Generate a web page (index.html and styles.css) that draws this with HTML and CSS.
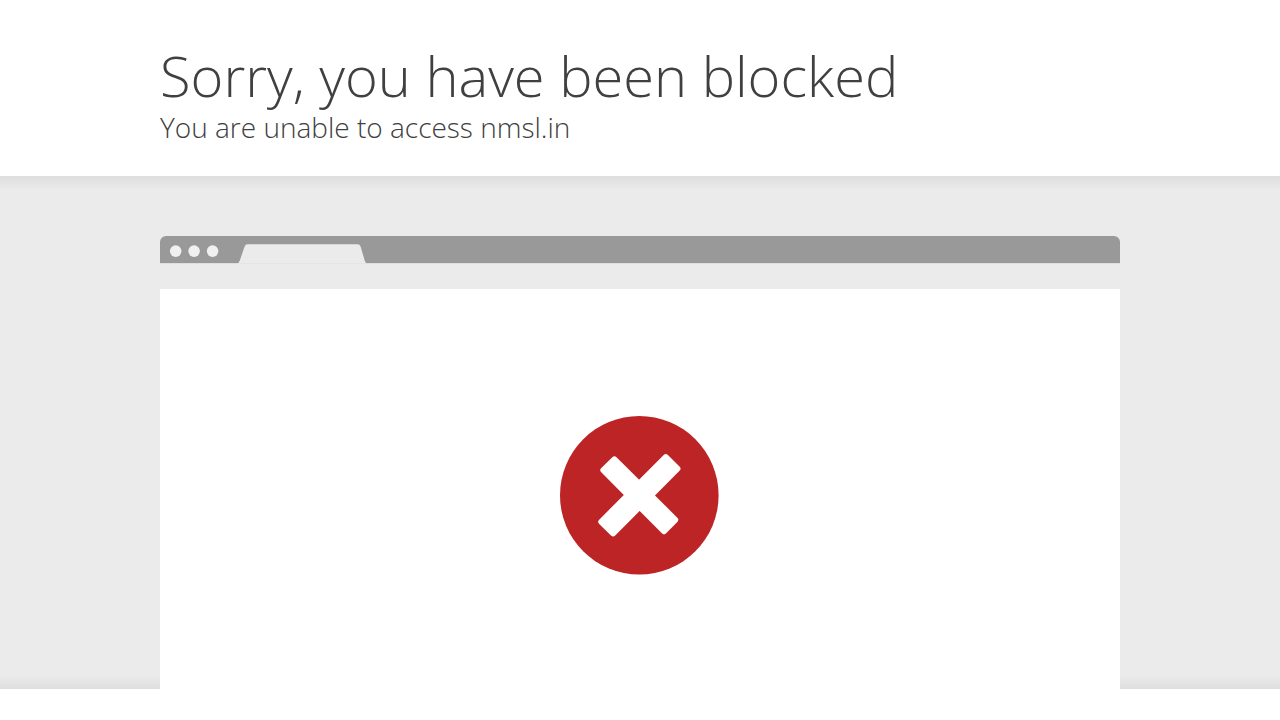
FILE: index.html
```html
<!DOCTYPE html>
<html lang="en">
<head>
<meta charset="utf-8">
<meta name="viewport" content="width=device-width, initial-scale=1">
<title>Sorry, you have been blocked</title>
<link rel="stylesheet" href="styles.css">
</head>
<body>
<header class="wrapper header">
  <h1 class="headline">Sorry, you have been blocked</h1>
  <h2 class="subheadline">You are unable to access nmsl.in</h2>
</header>
<main class="highlight">
  <div class="wrapper browser">
    <div class="browser-bar">
      <svg class="browser-tabs" width="210" height="28" viewBox="0 0 210 28" aria-hidden="true">
        <g fill="#f0f0f0">
          <circle cx="15.7" cy="15.1" r="5.8"/>
          <circle cx="34.1" cy="15.1" r="5.8"/>
          <circle cx="52.6" cy="15.1" r="5.8"/>
        </g>
        <path fill="#ebebeb" d="M77 27.5Q79 27 79.8 24.5L84.6 10.5Q85.4 8.3 87.5 8.3H197.500Q199.800 8.300 200.600 10.500L204.700 24.500Q205.500 27 207 27.500Z"/>
      </svg>
    </div>
    <div class="browser-page">
      <svg class="blocked-icon" width="160" height="160" viewBox="0 0 160 160" role="img" aria-label="Blocked">
        <circle cx="79.300" cy="79.300" r="79.300" fill="#bd2426"/>
        <g fill="#fff" stroke="#fff" stroke-width="6" stroke-linejoin="round">
          <path d="M43.400 54.200L54.400 43.400L115.200 103.800L104 115.200Z"/>
          <path d="M105.800 41.200L117.400 52.700L53.100 117.400L41.300 105.800Z"/>
        </g>
      </svg>
    </div>
  </div>
</main>
</body>
</html>
```
FILE: styles.css
```css
body {
  margin: 0;
  background: #fff;
  color: #404040;
  font-family: "Segoe UI", "Open Sans", "Noto Sans", sans-serif;
}

.wrapper {
  width: 75%;
  margin: 0 auto;
}

.header {
  padding: 40px 0 32px;
}

.headline,
.subheadline {
  margin: 0;
  font-weight: 300;
}

.headline {
  font-size: 56px;
  line-height: 70px;
}

.subheadline {
  font-size: 28px;
  line-height: 34px;
}

.highlight {
  padding-top: 60px;
  background:
    linear-gradient(#dedede, #ebebeb) top / 100% 14px no-repeat,
    linear-gradient(#ebebeb, #dedede) bottom / 100% 14px no-repeat,
    #ebebeb;
}

.browser-bar {
  height: 27px;
  margin-bottom: 25px;
  border-bottom: 1px solid #dedede;
  border-radius: 6px 6px 0 0;
  background: #999;
}

.browser-tabs,
.blocked-icon {
  display: block;
}

.browser-page {
  display: flex;
  justify-content: center;
  padding: 127px 0 113px;
  background: #fff;
}
```
